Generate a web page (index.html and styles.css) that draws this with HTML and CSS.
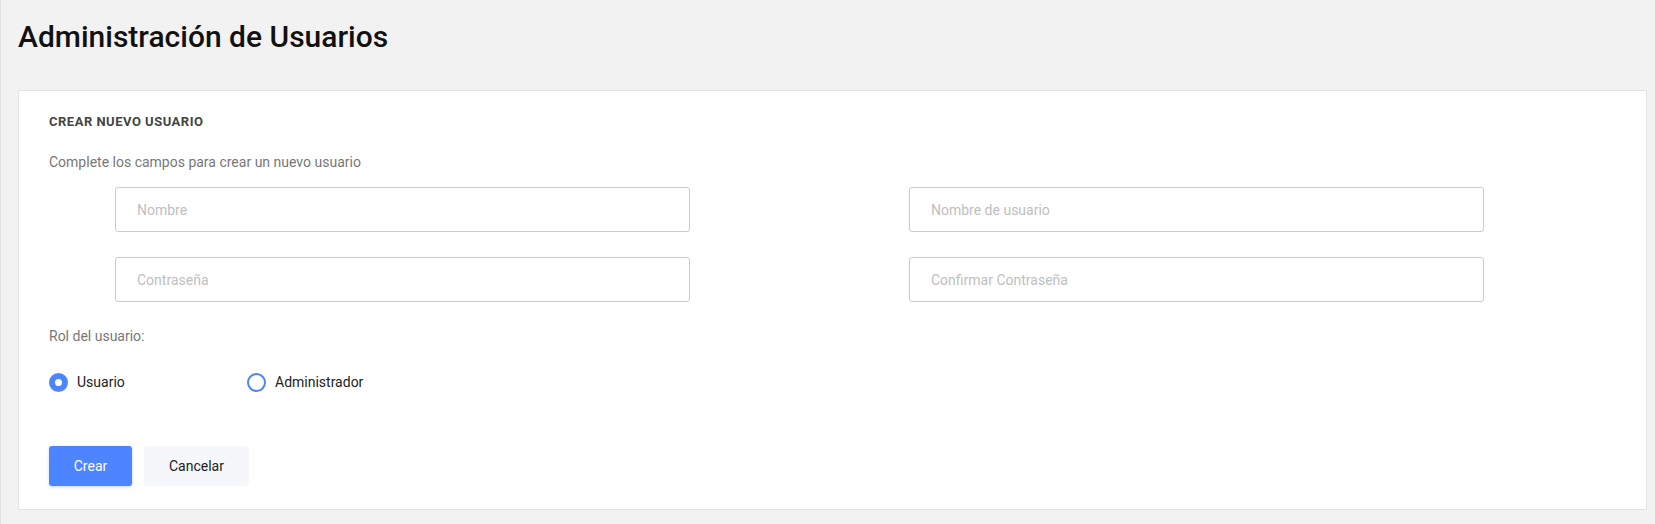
FILE: index.html
```html
<!DOCTYPE html>
<html lang="es">
<head>
    <meta charset="UTF-8">
    <meta name="viewport" content="width=device-width, initial-scale=1.0">
    <title>Administración de Usuarios</title>
    <link rel="stylesheet" href="styles.css">
</head>
<body>
    <h1 class="page-title">Administración de Usuarios</h1>

    <div class="card">
        <h2 class="card-title">CREAR NUEVO USUARIO</h2>
        <p class="card-subtitle">Complete los campos para crear un nuevo usuario</p>

        <form class="user-form" onsubmit="return false">
            <div class="fields">
                <input class="field" type="text" placeholder="Nombre">
                <input class="field" type="text" placeholder="Nombre de usuario">
                <input class="field" type="password" placeholder="Contraseña">
                <input class="field" type="password" placeholder="Confirmar Contraseña">
            </div>

            <p class="role-label">Rol del usuario:</p>
            <div class="roles">
                <label class="role">
                    <input type="radio" name="rol" value="usuario" checked>
                    <span class="radio"></span>
                    Usuario
                </label>
                <label class="role">
                    <input type="radio" name="rol" value="admin">
                    <span class="radio"></span>
                    Administrador
                </label>
            </div>

            <div class="actions">
                <button class="btn btn-primary" type="submit">Crear</button>
                <button class="btn btn-light" type="button">Cancelar</button>
            </div>
        </form>
    </div>
</body>
</html>
```

FILE: styles.css
```css
* {
    box-sizing: border-box;
}

body {
    margin: 0;
    padding: 19px 8px 14px 17px;
    background-color: #f2f2f2;
    border-left: 1px solid #e2e2e2;
    font-family: Roboto, "Liberation Sans", Arial, sans-serif;
    color: #222;
}

.page-title {
    margin: 0 0 35px 0;
    font-size: 30px;
    line-height: 36px;
    font-weight: 500;
    color: #111;
}

.card {
    background-color: #fff;
    border: 1px solid #e4e4e4;
    padding: 23px 30px 23px 30px;
}

.card-title {
    margin: 0;
    font-size: 13px;
    line-height: 16px;
    font-weight: 700;
    letter-spacing: 0.5px;
    color: #444;
}

.card-subtitle {
    margin: 22px 0 0;
    font-size: 14px;
    line-height: 20px;
    color: #777;
}

.user-form {
    margin: 0;
}

.fields {
    display: grid;
    grid-template-columns: 575px 575px;
    column-gap: 219px;
    row-gap: 25px;
    margin: 15px 0 0 66px;
}

.field {
    height: 45px;
    padding: 0 21px;
    border: 1px solid #cbcbcb;
    border-radius: 3px;
    font-family: inherit;
    font-size: 14px;
    color: #333;
    outline: none;
}

.field::placeholder {
    color: #c0c0c0;
}

.role-label {
    margin: 24px 0 0;
    font-size: 14px;
    line-height: 20px;
    color: #777;
}

.roles {
    display: flex;
    margin-top: 26px;
}

.role {
    display: flex;
    align-items: center;
    gap: 9px;
    width: 198px;
    height: 20px;
    font-size: 14px;
    color: #222;
    cursor: pointer;
}

.role input {
    display: none;
}

.radio {
    width: 19px;
    height: 19px;
    border-radius: 50%;
    border: 2px solid #4d84ff;
    background-color: #fff;
}

.role input:checked + .radio {
    border-width: 6px;
}

.actions {
    display: flex;
    gap: 12px;
    margin-top: 54px;
}

.btn {
    height: 40px;
    border: none;
    border-radius: 3px;
    font-family: inherit;
    font-size: 14px;
    cursor: pointer;
}

.btn-primary {
    width: 83px;
    background-color: #4d84ff;
    color: #fff;
    box-shadow: 0 1px 3px rgba(77, 132, 255, 0.35);
}

.btn-light {
    width: 105px;
    background-color: #f5f7fa;
    color: #222;
}
```
